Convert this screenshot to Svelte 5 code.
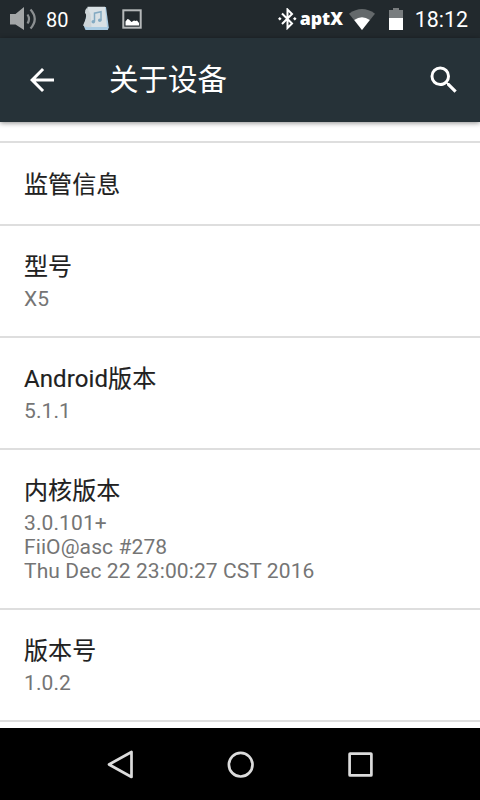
<!--
  "About device" settings page: status bar, app bar, scrolled preference
  list and the system navigation bar.
-->
<script lang="ts">
  type Item = {
    title: string;
    summary?: string[];
  };

  const volume = 80;
  const clock = "18:12";

  const items: Item[] = [
    { title: "监管信息" },
    { title: "型号", summary: ["X5"] },
    { title: "Android版本", summary: ["5.1.1"] },
    {
      title: "内核版本",
      summary: ["3.0.101+", "FiiO@asc #278", "Thu Dec 22 23:00:27 CST 2016"],
    },
    { title: "版本号", summary: ["1.0.2"] },
  ];
</script>

<div class="screen">
  <div class="status">
    <svg class="speaker" width="28" height="24" viewBox="0 0 28 24">
      <path d="M0 7h5.500L14 0v23L5.500 17.500H0z" fill="#a3a6a7" />
      <path d="M17.500 7.500q3 4.500 0 9" fill="none" stroke="#8b8f91" stroke-width="2.200" />
      <path d="M20.500 2.500q8.500 9.500 0 19" fill="none" stroke="#8b8f91" stroke-width="2.200" />
    </svg>
    <span class="volume">{volume}</span>

    <svg class="music" width="27" height="26" viewBox="0 0 27 26">
      <path d="M5 1h18l2.800 20.500-1 2.500H2.500L1 20.500z" fill="#a9cbe2" />
      <path d="M4.500.8h17.500l2 20.200H7L3 18z" fill="#d9e1e5" />
      <path d="M4 1.800q-2.500 2-2 5.200 2 2 1 5.500Q1 17 0 19.500q3 2.500 8.500 1.500L7.500 8z" fill="#cdd4d7" />
      <path d="M11.500 15.500V7.200l6.500-1.400v8.200" fill="none" stroke="#83aac2" stroke-width="1.500" />
      <circle cx="10.300" cy="15.800" r="1.800" fill="#83aac2" />
      <circle cx="16.800" cy="14.300" r="1.800" fill="#83aac2" />
    </svg>

    <svg class="picture" width="20" height="20" viewBox="0 0 20 20">
      <rect x="1.300" y="1.300" width="17.400" height="17.400" fill="none" stroke="#b5b8b9" stroke-width="2" />
      <path d="M3.500 16.500v-4l2-2.500 1.500.5 2.500 2.500 2.500-1.500 1.500.500 1.500-.5 2 2.500v2.500z" fill="#fff" />
    </svg>

    <span class="space"></span>

    <svg class="bluetooth" width="19" height="22" viewBox="0 0 19 22">
      <path d="M4 5.500l10 10L9.500 20V1.500L14 6 4 16" fill="none" stroke="#fff" stroke-width="2" />
      <path d="M0 10.800l1.800-1.800 1.800 1.800-1.800 1.800zM15 10.800l1.800-1.800 1.800 1.800-1.800 1.800z" fill="#fff" />
    </svg>
    <span class="aptx">aptX</span>

    <svg class="wifi" width="26" height="21" viewBox="0 0 26 21">
      <path d="M0 4.700Q13-4.500 26 4.700L13 21z" fill="#64696b" />
      <path d="M5.200 11Q13 5.500 20.800 11L13 21z" fill="#fff" />
    </svg>

    <svg class="battery" width="14" height="22" viewBox="0 0 14 22">
      <path d="M0 2h4V0h6v2h4v9H0z" fill="#797d7f" />
      <path d="M0 10h14v12H0z" fill="#fff" />
    </svg>
    <span class="clock">{clock}</span>
  </div>

  <header class="appbar">
    <svg class="back" width="36" height="36" viewBox="0 0 24 24">
      <path d="M20 11H7.830l5.590-5.590L12 4l-8 8 8 8 1.410-1.410L7.830 13H20v-2z" fill="#fff" />
    </svg>
    <h1>关于设备</h1>
    <svg class="search" width="36" height="36" viewBox="0 0 24 24">
      <path
        d="M15.500 14h-.79l-.28-.27A6.471 6.471 0 0 0 16 9.500 6.500 6.500 0 1 0 9.500 16c1.610 0 3.090-.59 4.230-1.570l.27.28v.79l5 4.990L20.490 19l-4.990-5zm-6 0C7.010 14 5 11.990 5 9.500S7.010 5 9.500 5 14 7.010 14 9.500 11.990 14 9.500 14z"
        fill="#fff"
      />
    </svg>
  </header>

  <main class="list">
    {#each items as item}
      <section class="item">
        <h2>{item.title}</h2>
        {#if item.summary}
          <div class="summary">
            {#each item.summary as line}
              <p>{line}</p>
            {/each}
          </div>
        {/if}
      </section>
    {/each}
  </main>

  <nav class="navbar">
    <svg width="30" height="30" viewBox="0 0 30 30">
      <path d="M25.500 2v25L3 14.500z" />
    </svg>
    <svg width="30" height="30" viewBox="0 0 30 30">
      <circle cx="14.700" cy="14.700" r="11.800" />
    </svg>
    <svg width="30" height="30" viewBox="0 0 30 30">
      <rect x="3.600" y="3.600" width="21.800" height="21.800" rx="0.500" />
    </svg>
  </nav>
</div>

<style>
  :global(body) {
    margin: 0;
    background: #000;
  }

  .screen {
    display: flex;
    flex-direction: column;
    width: 480px;
    height: 800px;
    overflow: hidden;
    background: #fff;
    font-family: Roboto, "Noto Sans CJK SC", sans-serif;
  }

  svg {
    display: block;
    flex: none;
  }

  h1,
  h2,
  p {
    margin: 0;
    font-weight: 400;
    white-space: nowrap;
  }

  .status {
    display: flex;
    flex: none;
    align-items: center;
    box-sizing: border-box;
    height: 38px;
    padding: 0 12px 0 10px;
    background: #22292d;
    color: #fff;
  }
  .volume {
    box-sizing: border-box;
    width: 37px;
    padding: 2px 0 0 8px;
    font-size: 20px;
    line-height: 36px;
  }
  .music {
    margin-left: 8px;
  }
  .picture {
    margin-left: 12px;
  }
  .space {
    flex: 1;
  }
  .aptx {
    width: 44px;
    height: 38px;
    margin-left: 3px;
    font: 800 17.700px/36px "Open Sans", sans-serif;
  }
  .wifi {
    margin-left: 5px;
  }
  .battery {
    margin: 0 12px 0 14px;
  }
  .clock {
    padding-top: 2px;
    font-size: 21.400px;
    line-height: 36px;
  }

  .appbar {
    z-index: 1;
    display: flex;
    flex: none;
    align-items: center;
    box-sizing: border-box;
    height: 84px;
    padding: 0 18px 0 24px;
    background: #263238;
    color: #fff;
    box-shadow: 0 1px 5px rgba(0, 0, 0, 0.45);
  }
  h1 {
    flex: 1;
    margin-left: 49px;
    font-size: 29.500px;
    line-height: 84px;
  }

  /* The list is scrolled, so its first divider sits just below the app bar. */
  .list {
    flex: 1;
    min-height: 0;
    padding-top: 19px;
    overflow: hidden;
  }
  .item {
    box-sizing: border-box;
    min-height: 83px;
    padding: 24px 24px 25px;
    border-top: 2px solid #dedede;
  }
  .item:first-child {
    padding: 25px 24px 22px;
  }
  .item:last-child {
    border-bottom: 2px solid #dedede;
  }
  h2 {
    color: #212121;
    font-size: 24px;
    line-height: 34px;
    letter-spacing: 0.100px;
    -webkit-text-stroke: 0.150px currentColor;
  }
  .summary {
    margin-top: 3px;
    color: #757575;
    font-size: 21px;
    line-height: 24px;
    letter-spacing: 0.100px;
  }

  .navbar {
    display: flex;
    flex: none;
    align-items: center;
    justify-content: center;
    gap: 90px;
    box-sizing: border-box;
    height: 72px;
    padding: 2px 0 0 2px;
    background: #000;
  }
  .navbar svg {
    fill: none;
    stroke: #dcdcdc;
    stroke-width: 2.700;
    stroke-linejoin: round;
  }
</style>
